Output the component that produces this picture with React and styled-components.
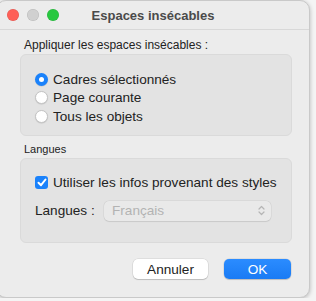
import styled, { createGlobalStyle } from 'styled-components';

const GlobalStyle = createGlobalStyle`
  html, body {
    margin: 0;
    padding: 0;
    background: #f4f4f4;
    font-family: "Liberation Sans", Arial, sans-serif;
    font-size: 13.6px;
    color: #222;
  }
`;

const Window = styled.div`
  width: 314px;
  height: 298px;
  margin-left: -4px;
  box-sizing: border-box;
  background: #ececec;
  border: 1px solid #c9c9c9;
  border-radius: 10px;
  box-shadow: 0 1px 4px rgba(0, 0, 0, 0.25);
  overflow: hidden;
  display: flex;
  flex-direction: column;
`;

const TitleBar = styled.div`
  height: 28px;
  flex: none;
  display: flex;
  align-items: center;
  padding-left: 10px;
  border-bottom: 1px solid #d8d8d8;
  position: relative;
`;

const Light = styled.span`
  width: 12px;
  height: 12px;
  border-radius: 50%;
  margin-right: 8px;
  background: ${p => p.$color};
  box-shadow: inset 0 0 0 0.5px rgba(0, 0, 0, 0.12);
`;

const Title = styled.div`
  position: absolute;
  left: 0;
  right: 0;
  text-align: center;
  font-weight: 700;
  font-size: 13px;
  color: #4a4a4a;
  pointer-events: none;
`;

const Body = styled.div`
  padding: 7px 17px 0 23px;
  display: flex;
  flex-direction: column;
`;

const GroupLabel = styled.div`
  padding-left: 4px;
  height: 16px;
  line-height: 16px;
  margin-top: ${p => p.$mt || 0}px;
  margin-bottom: 1px;
  font-size: ${p => p.$size}px;
  color: #222;
`;

const Box = styled.div`
  background: #e3e3e3;
  border: 1px solid #dadada;
  border-radius: 6px;
  box-sizing: border-box;
  height: ${p => p.$h}px;
  padding: ${p => p.$pad};
  display: flex;
  flex-direction: column;
`;

const Option = styled.label`
  display: flex;
  align-items: center;
  height: 18.5px;
  gap: 5px;
  color: #222;
`;

const Radio = styled.span`
  width: 13px;
  height: 13px;
  border-radius: 50%;
  box-sizing: border-box;
  background: ${p => (p.$on ? '#1a82fb' : '#fff')};
  border: ${p => (p.$on ? 'none' : '0.5px solid #c4c4c4')};
  box-shadow: 0 0.5px 1px rgba(0, 0, 0, 0.15);
  display: flex;
  align-items: center;
  justify-content: center;
  &::after {
    content: '';
    display: ${p => (p.$on ? 'block' : 'none')};
    width: 5px;
    height: 5px;
    border-radius: 50%;
    background: #fff;
  }
`;

const Check = styled.span`
  width: 13px;
  height: 13px;
  border-radius: 3px;
  background: #1a82fb;
  display: flex;
  align-items: center;
  justify-content: center;
`;

const Row = styled.div`
  display: flex;
  align-items: center;
  margin-top: ${p => p.$mt || 0}px;
`;

const FieldLabel = styled.span`
  width: 69px;
  color: #222;
`;

const Select = styled.div`
  width: 167px;
  height: 20px;
  box-sizing: border-box;
  background: #e9e9e9;
  border-radius: 5px;
  box-shadow: 0 0 0 0.5px rgba(0, 0, 0, 0.07), 0 0.5px 1px rgba(0, 0, 0, 0.08);
  display: flex;
  align-items: center;
  justify-content: space-between;
  padding: 0 6px 0 8px;
  color: #b3b3b3;
`;

const Buttons = styled.div`
  display: flex;
  justify-content: flex-end;
  gap: 16px;
  margin-top: 16px;
  padding-right: 1px;
`;

const Button = styled.button`
  font: inherit;
  height: 20px;
  width: ${p => p.$w}px;
  padding: 0;
  border: none;
  border-radius: 5px;
  color: ${p => (p.$primary ? '#fff' : '#222')};
  background: ${p => (p.$primary ? 'linear-gradient(#2b8cff, #1a7bf4)' : '#fff')};
  box-shadow: 0 0 0 0.5px rgba(0, 0, 0, 0.12), 0 1px 1px rgba(0, 0, 0, 0.15);
`;

export default function App() {
  return (
    <>
      <GlobalStyle />
      <Window>
        <TitleBar>
          <Light $color="#fe5f57" />
          <Light $color="#d0d0d0" />
          <Light $color="#28c840" />
          <Title>Espaces insécables</Title>
        </TitleBar>
        <Body>
          <GroupLabel $size={12}>Appliquer les espaces insécables :</GroupLabel>
          <Box $h={82} $pad="15px 0 0 14px">
            <Option><Radio $on />Cadres sélectionnés</Option>
            <Option><Radio />Page courante</Option>
            <Option><Radio />Tous les objets</Option>
          </Box>
          <GroupLabel $size={11} $mt={5}>Langues</GroupLabel>
          <Box $h={85} $pad="14px 0 0 14px">
            <Option>
              <Check>
                <svg width="10" height="9" viewBox="0 0 10 9">
                  <path d="M1.5 4.8 L4 7.2 L8.5 1.5" fill="none" stroke="#fff" strokeWidth="2" strokeLinecap="round" strokeLinejoin="round" />
                </svg>
              </Check>
              Utiliser les infos provenant des styles
            </Option>
            <Row $mt={9}>
              <FieldLabel>Langues :</FieldLabel>
              <Select>
                <span>Français</span>
                <svg width="7" height="11" viewBox="0 0 7 11">
                  <path d="M1 4 L3.5 1.5 L6 4 M1 7 L3.5 9.5 L6 7" fill="none" stroke="#b5b5b5" strokeWidth="1.2" strokeLinecap="round" strokeLinejoin="round" />
                </svg>
              </Select>
            </Row>
          </Box>
          <Buttons>
            <Button $w={75}>Annuler</Button>
            <Button $w={67} $primary>OK</Button>
          </Buttons>
        </Body>
      </Window>
    </>
  );
}
